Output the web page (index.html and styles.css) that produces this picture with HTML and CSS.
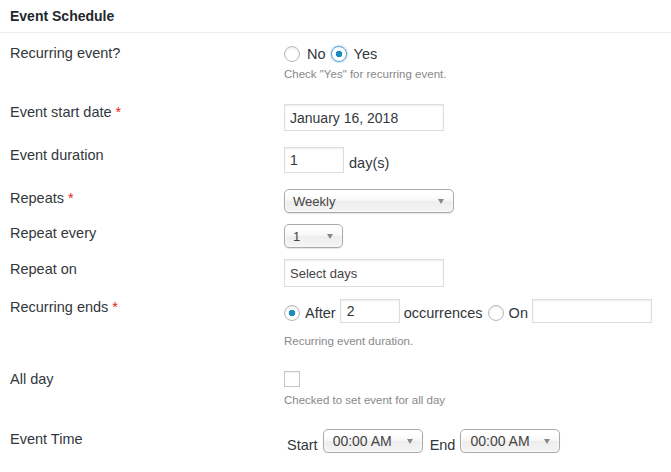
FILE: index.html
```html
<!DOCTYPE html>
<html>
  <head>
    <title>Event Schedule</title>
    <meta name="viewport" content="width=device-width,initial-scale=1">
    <link rel="stylesheet" href="styles.css">
  </head>
  <body>
    <h2 class="box-title">Event Schedule</h2>
    <div class="schedule">
      <div class="row">
        <div class="row-label">Recurring event?</div>
        <div class="row-field flush">
          <div class="choices">
            <label class="choice"><input type="radio" name="recurring"> No</label>
            <label class="choice"><input type="radio" name="recurring" class="focused" checked> Yes</label>
          </div>
          <p class="help help-tight">Check "Yes" for recurring event.</p>
        </div>
      </div>

      <div class="row row-wide">
        <div class="row-label">Event start date <span class="required">*</span></div>
        <div class="row-field">
          <input type="text" class="text-input date-input" value="January 16, 2018">
        </div>
      </div>

      <div class="row row-mid">
        <div class="row-label">Event duration</div>
        <div class="row-field">
          <div class="inline inline-end">
            <input type="text" class="text-input small-input" value="1">
            <span class="inline-text">day(s)</span>
          </div>
        </div>
      </div>

      <div class="row row-15">
        <div class="row-label">Repeats <span class="required">*</span></div>
        <div class="row-field nudge">
          <div class="chosen chosen-wide"><span>Weekly</span><b class="caret"></b></div>
        </div>
      </div>

      <div class="row">
        <div class="row-label">Repeat every</div>
        <div class="row-field nudge">
          <div class="chosen chosen-small"><span>1</span><b class="caret"></b></div>
        </div>
      </div>

      <div class="row row-11">
        <div class="row-label">Repeat on</div>
        <div class="row-field flush">
          <input type="text" class="text-input days-input" value="Select days">
        </div>
      </div>

      <div class="row">
        <div class="row-label">Recurring ends <span class="required">*</span></div>
        <div class="row-field">
          <div class="inline inline-end ends">
            <input type="radio" name="ends" checked>
            <span class="inline-text">After</span>
            <input type="text" class="text-input count-input" value="2">
            <span class="inline-text">occurrences</span>
            <input type="radio" name="ends">
            <span class="inline-text">On</span>
            <input type="text" class="text-input on-input" value="">
          </div>
          <p class="help help-wide">Recurring event duration.</p>
        </div>
      </div>

      <div class="row row-wide">
        <div class="row-label">All day</div>
        <div class="row-field">
          <input type="checkbox" class="checkbox">
          <p class="help help-mid">Checked to set event for all day</p>
        </div>
      </div>

      <div class="row row-21">
        <div class="row-label">Event Time</div>
        <div class="row-field flush">
          <div class="inline inline-end time">
            <span class="time-text">Start</span>
            <div class="chosen chosen-time"><span>00:00 AM</span><b class="caret"></b></div>
            <span class="time-text end-text">End</span>
            <div class="chosen chosen-time"><span>00:00 AM</span><b class="caret"></b></div>
          </div>
        </div>
      </div>
    </div>
  </body>
</html>
```

FILE: styles.css
```css
body {
  margin: 0;
  font-family: "Liberation Sans", Arial, sans-serif;
  font-size: 14.5px;
  color: #32373c;
  background: #fff;
}

.box-title {
  margin: 0;
  padding: 6px 10px;
  font-size: 14px;
  font-weight: bold;
  line-height: 20px;
  color: #23282d;
  border-bottom: 1px solid #eee;
}

.schedule {
  padding: 0 10px;
}

.row {
  display: flex;
  align-items: flex-start;
  margin-top: 10px;
}

.row-wide { margin-top: 20px; }
.row-mid { margin-top: 14px; }
.row-15 { margin-top: 15px; }
.row-11 { margin-top: 11px; }
.row-21 { margin-top: 21px; }

.row-label {
  width: 274px;
  flex: none;
  line-height: 20px;
}

.required {
  color: #e2231a;
}

.row-field {
  flex: 1;
  padding-top: 2px;
}

.row-field.flush { padding-top: 0; }
.row-field.nudge { padding-top: 1px; }

.help {
  margin: 0;
  font-size: 11.5px;
  line-height: 16px;
  color: #888;
}

.help-tight { margin-top: 1px; }
.help-wide { margin-top: 10px; }
.help-mid { margin-top: 5px; }

/* radios */
.choices {
  display: flex;
  height: 22px;
  align-items: center;
}

.choice {
  display: inline-flex;
  align-items: center;
  gap: 7px;
  margin-right: 5px;
}

input[type="radio"] {
  appearance: none;
  -webkit-appearance: none;
  box-sizing: border-box;
  width: 16px;
  height: 16px;
  margin: 0;
  flex: none;
  border: 1px solid #b4b9be;
  border-radius: 50%;
  background: #fff;
  box-shadow: inset 0 1px 2px rgba(0, 0, 0, 0.1);
}

input[type="radio"]:checked {
  background: radial-gradient(circle, #1e8cbe 0 3px, #fff 3.6px);
}

input[type="radio"].focused {
  border-color: #5b9dd9;
  box-shadow: 0 0 2px rgba(30, 140, 190, 0.8);
}

.checkbox {
  appearance: none;
  -webkit-appearance: none;
  display: block;
  box-sizing: border-box;
  width: 16px;
  height: 16px;
  margin: 0;
  border: 1px solid #c3c6c9;
  background: #fff;
  box-shadow: inset 0 1px 2px rgba(0, 0, 0, 0.06);
}

/* text inputs */
.text-input {
  display: block;
  box-sizing: border-box;
  margin: 0;
  padding: 0 5px;
  border: 1px solid #ddd;
  box-shadow: inset 0 1px 2px rgba(0, 0, 0, 0.07);
  background: #fff;
  color: #32373c;
  font: 14px "Liberation Sans", Arial, sans-serif;
  outline: none;
}

.date-input { width: 160px; height: 27px; }
.small-input { width: 60px; height: 26px; }
.days-input { width: 160px; height: 28px; font-size: 13px; color: #444; }
.count-input { width: 60px; height: 24px; padding-left: 6px; }
.on-input { width: 120px; height: 24px; }

.inline {
  display: flex;
  gap: 5px;
}

.inline-end {
  align-items: flex-end;
}

.inline-text {
  line-height: 20px;
}

.ends input[type="radio"] {
  margin-bottom: 2px;
}

.ends .text-input {
  margin: 0 -1px;
}

/* chosen-like selects */
.chosen {
  box-sizing: border-box;
  display: flex;
  align-items: center;
  justify-content: space-between;
  height: 24px;
  padding: 0 9px 0 8px;
  border: 1px solid #aaa;
  border-radius: 5px;
  background: linear-gradient(#fff 20%, #f6f6f6 50%, #eee 52%, #f4f4f4 100%);
  box-shadow: inset 0 0 3px #fff, 0 1px 1px rgba(0, 0, 0, 0.1);
  color: #444;
  font-size: 13px;
}

.chosen-wide { width: 170px; }
.chosen-small { width: 59px; }
.chosen-time { width: 100px; font-size: 14px; padding-left: 9px; }

.caret {
  width: 0;
  height: 0;
  border-left: 3.5px solid transparent;
  border-right: 3.5px solid transparent;
  border-top: 5px solid #888;
}

.time {
  padding-left: 3px;
}

.time-text {
  line-height: 16px;
}

.end-text {
  margin-left: 2px;
}
```
